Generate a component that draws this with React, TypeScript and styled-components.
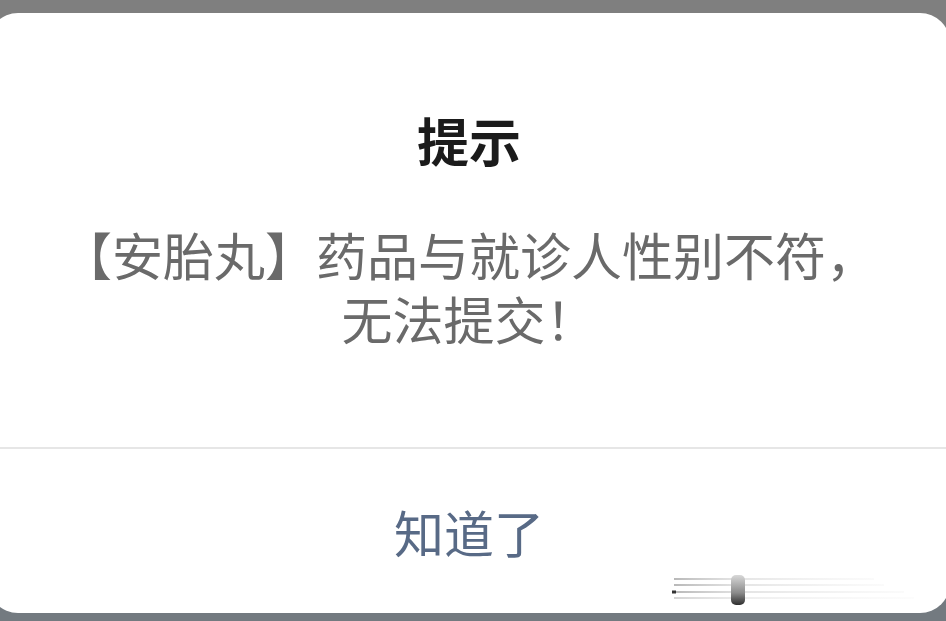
import React from "react";
import styled, { createGlobalStyle } from "styled-components";

const Global = createGlobalStyle`
  html, body { margin: 0; padding: 0; }
  body {
    width: 946px;
    height: 621px;
    overflow: hidden;
    background: linear-gradient(#7f7f7f 0 50%, #737a80 50%);
    font-family: "Noto Sans CJK SC", "Noto Sans", sans-serif;
  }
`;

const Page = styled.div`
  width: 946px;
  height: 621px;
  padding-top: 13px;
  box-sizing: border-box;
  overflow: hidden;
`;

const Dialog = styled.div`
  position: relative;
  margin-left: -12px;
  width: 962px;
  height: 600px;
  background: #ffffff;
  border-radius: 30px;
  display: flex;
  flex-direction: column;
`;

const Body = styled.div`
  height: 434px;
  box-sizing: border-box;
  padding-top: 97px;
  display: flex;
  flex-direction: column;
  align-items: center;
`;

const Title = styled.div`
  font-size: 52px;
  line-height: 60px;
  font-weight: 700;
  color: #1b1b1b;
`;

const Message = styled.div`
  margin-top: 52px;
  font-size: 51px;
  line-height: 64px;
  color: #6a6a6a;
  text-align: center;
  white-space: nowrap;
`;

const Divider = styled.div`
  height: 2px;
  background: #e6e6e6;
`;

const Footer = styled.div`
  flex: 1;
  display: flex;
  align-items: center;
  justify-content: center;
`;

const ActionButton = styled.button`
  border: none;
  background: transparent;
  padding: 0;
  font-family: inherit;
  font-size: 50px;
  line-height: 60px;
  color: #586a86;
  cursor: pointer;
`;

const Watermark = styled.svg`
  position: absolute;
  left: 684px;
  top: 562px;
  width: 260px;
  height: 32px;
  pointer-events: none;
`;

export default function App() {
  return (
    <>
      <Global />
      <Page>
        <Dialog>
          <Body>
            <Title>提示</Title>
            <Message>
              【安胎丸】药品与就诊人性别不符，
              <br />
              无法提交！
            </Message>
          </Body>
          <Divider />
          <Footer>
            <ActionButton>知道了</ActionButton>
          </Footer>
          <Watermark viewBox="0 0 260 32">
            <defs>
              <linearGradient id="fadeLine" x1="0" x2="1" y1="0" y2="0">
                <stop offset="0" stopColor="#9a9a9a" stopOpacity="0.7" />
                <stop offset="0.3" stopColor="#c8c8c8" stopOpacity="0.5" />
                <stop offset="1" stopColor="#e8e8e8" stopOpacity="0.2" />
              </linearGradient>
              <linearGradient id="bar" x1="0" x2="0" y1="0" y2="1">
                <stop offset="0" stopColor="#d8d8d8" />
                <stop offset="0.6" stopColor="#8a8a8a" />
                <stop offset="1" stopColor="#2e2e2e" />
              </linearGradient>
            </defs>
            <rect x="2" y="3" width="200" height="2" fill="url(#fadeLine)" />
            <rect x="2" y="9" width="210" height="2" fill="url(#fadeLine)" />
            <rect x="2" y="16" width="230" height="2" fill="url(#fadeLine)" />
            <rect x="2" y="22" width="240" height="2" fill="url(#fadeLine)" opacity="0.6" />
            <rect x="0" y="15.5" width="4" height="3" fill="#333" />
            <rect x="59" y="0" width="14" height="30" rx="5" fill="url(#bar)" />
          </Watermark>
        </Dialog>
      </Page>
    </>
  );
}
